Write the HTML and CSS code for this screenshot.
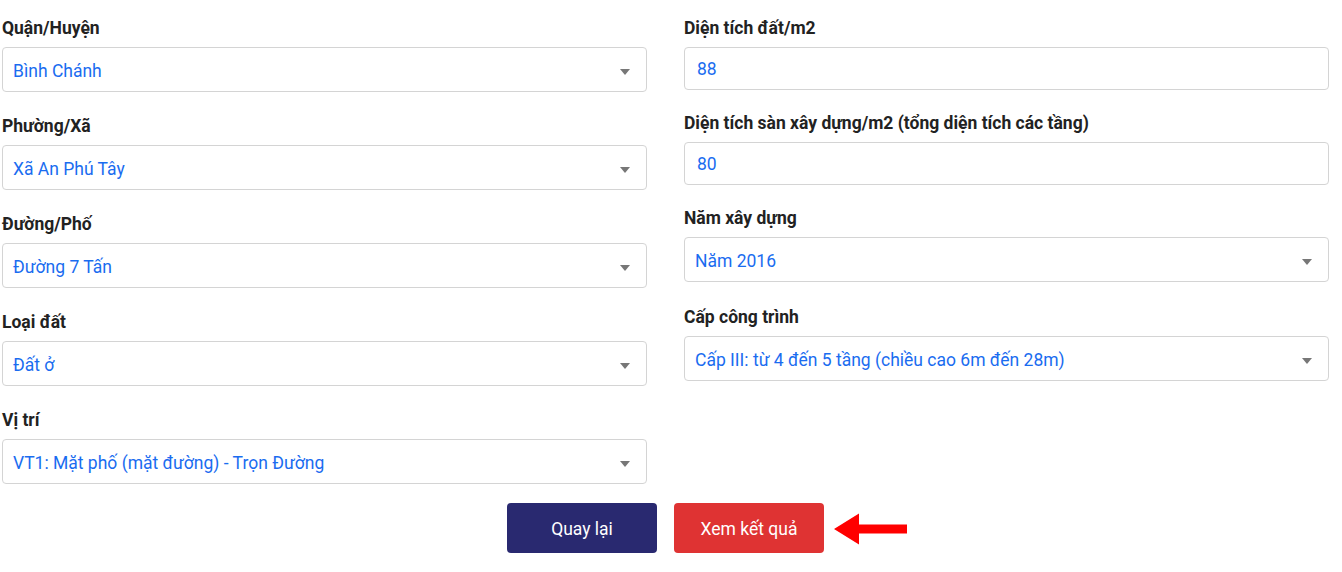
FILE: index.html
```html
<!DOCTYPE html>
<html lang="vi">
<head>
<meta charset="utf-8">
<title>Form</title>
<link rel="stylesheet" href="styles.css">
</head>
<body>
<div class="form">
  <div class="col">
    <div class="field">
      <div class="label">Quận/Huyện</div>
      <div class="select"><span>Bình Chánh</span><i class="caret"></i></div>
    </div>
    <div class="field">
      <div class="label">Phường/Xã</div>
      <div class="select"><span>Xã An Phú Tây</span><i class="caret"></i></div>
    </div>
    <div class="field">
      <div class="label">Đường/Phố</div>
      <div class="select"><span>Đường 7 Tấn</span><i class="caret"></i></div>
    </div>
    <div class="field">
      <div class="label">Loại đất</div>
      <div class="select"><span>Đất ở</span><i class="caret"></i></div>
    </div>
    <div class="field">
      <div class="label">Vị trí</div>
      <div class="select"><span>VT1: Mặt phố (mặt đường) - Trọn Đường</span><i class="caret"></i></div>
    </div>
  </div>
  <div class="col">
    <div class="field f-input">
      <div class="label">Diện tích đất/m2</div>
      <div class="input">88</div>
    </div>
    <div class="field f-input">
      <div class="label">Diện tích sàn xây dựng/m2 (tổng diện tích các tầng)</div>
      <div class="input">80</div>
    </div>
    <div class="field f-right">
      <div class="label">Năm xây dựng</div>
      <div class="select"><span>Năm 2016</span><i class="caret"></i></div>
    </div>
    <div class="field f-right">
      <div class="label">Cấp công trình</div>
      <div class="select"><span>Cấp III: từ 4 đến 5 tầng (chiều cao 6m đến 28m)</span><i class="caret"></i></div>
    </div>
  </div>
</div>
<div class="actions">
  <button class="btn btn-back">Quay lại</button>
  <button class="btn btn-go">Xem kết quả</button>
  <svg class="arrow" width="74" height="32" viewBox="0 0 74 32"><polygon points="0,16 25,0.5 25,11.5 73,11.5 73,20.5 25,20.5 25,31.5" fill="#ff0000"/></svg>
</div>
</body>
</html>
```
FILE: styles.css
```css
html, body {
  margin: 0;
  padding: 0;
  background: #fff;
}
body {
  font-family: Roboto, "Liberation Sans", Arial, sans-serif;
  width: 1342px;
  height: 572px;
  overflow: hidden;
}
.form {
  display: grid;
  grid-template-columns: 645px 645px;
  column-gap: 37px;
  padding: 18px 0 0 2px;
}
.col {
  display: flex;
  flex-direction: column;
}
.field {
  display: flex;
  flex-direction: column;
  margin-bottom: 24px;
}
.label {
  font-size: 17.5px;
  font-weight: 700;
  color: #222;
  line-height: 20px;
  height: 20px;
  margin-bottom: 9px;
  white-space: nowrap;
}
.select, .input {
  box-sizing: border-box;
  border: 1px solid #d4d4d4;
  border-radius: 4px;
  color: #1a6cf0;
  font-size: 17.5px;
  display: flex;
  align-items: center;
}
.select {
  height: 45px;
  padding: 3px 16px 0 10px;
  justify-content: space-between;
}
.input {
  height: 43px;
  padding: 0 12px;
}
.f-input {
  margin-bottom: 23px;
}
.f-right {
  margin-bottom: 25px;
}
.caret {
  width: 0;
  height: 0;
  border-left: 5px solid transparent;
  border-right: 5px solid transparent;
  border-top: 6px solid #777;
  margin-top: 1px;
}
.actions {
  display: flex;
  align-items: center;
  padding-left: 507px;
  margin-top: -5px;
}
.btn {
  width: 150px;
  height: 50px;
  border: none;
  border-radius: 4px;
  color: #fff;
  font-family: Roboto, "Liberation Sans", Arial, sans-serif;
  font-size: 17.5px;
  padding: 2px 0 0;
}
.btn-back {
  background: #292970;
}
.btn-go {
  background: #df3333;
  margin-left: 17px;
}
.arrow {
  margin-left: 10px;
  margin-top: 1px;
}
```
